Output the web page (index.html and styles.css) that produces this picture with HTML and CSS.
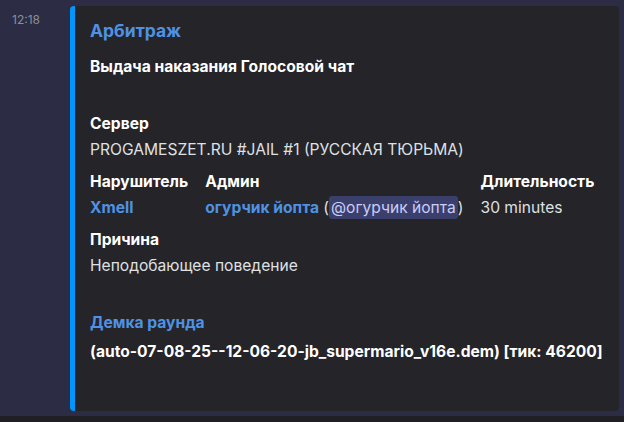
FILE: index.html
```html
<!DOCTYPE html>
<html lang="ru">
<head>
    <meta charset="UTF-8">
    <title>Арбитраж</title>
    <link rel="stylesheet" href="styles.css">
</head>
<body>
    <div class="chat">
        <div class="message">
            <div class="timestamp">12:18</div>
            <div class="embed">
                <div class="embed-title">Арбитраж</div>
                <div class="embed-desc">Выдача наказания Голосовой чат</div>

                <div class="fields">
                    <div class="field">
                        <div class="field-name">Сервер</div>
                        <div class="field-value">PROGAMESZET.RU #JAIL #1 (РУССКАЯ ТЮРЬМА)</div>
                    </div>
                    <div class="field-row">
                        <div class="field">
                            <div class="field-name">Нарушитель</div>
                            <div class="field-value"><span class="link">Xmell</span></div>
                        </div>
                        <div class="field">
                            <div class="field-name">Админ</div>
                            <div class="field-value"><span class="link">огурчик йопта</span> (<span class="mention">@огурчик йопта</span>)</div>
                        </div>
                        <div class="field">
                            <div class="field-name">Длительность</div>
                            <div class="field-value">30 minutes</div>
                        </div>
                    </div>
                    <div class="field">
                        <div class="field-name">Причина</div>
                        <div class="field-value">Неподобающее поведение</div>
                    </div>
                </div>

                <div class="demo">
                    <div class="demo-title">Демка раунда</div>
                    <div class="demo-file">(auto-07-08-25--12-06-20-jb_supermario_v16e.dem) [тик: 46200]</div>
                </div>
            </div>
        </div>
    </div>
</body>
</html>
```

FILE: styles.css
```css
body {
    margin: 0;
    background-color: #1f1f24;
    font-family: Inter, "Noto Sans", Arial, sans-serif;
    color: #dfe0e4;
}

.chat {
    background-color: #2c2d44;
    padding: 6px 0 5px 0;
}

.message {
    display: flex;
}

.timestamp {
    width: 70px;
    box-sizing: border-box;
    padding: 6px 0 0 12px;
    font-size: 12px;
    line-height: 16px;
    color: #8c8e99;
}

.embed {
    width: 549px;
    box-sizing: border-box;
    background-color: #242429;
    border-left: 5px solid #0096ff;
    border-radius: 4px;
    padding: 13px 16px 47px 15px;
    font-size: 15.6px;
    line-height: 24px;
}

.embed-title {
    font-size: 17.5px;
    font-weight: bold;
    color: #4f92e3;
}

.embed-desc {
    margin-top: 12px;
    font-weight: bold;
    color: #ffffff;
}

.fields {
    margin-top: 33px;
    display: flex;
    flex-direction: column;
    gap: 8px;
}

.field-row {
    display: flex;
    gap: 17px;
}

.field-name {
    font-weight: bold;
    color: #ffffff;
}

.field-value {
    margin-top: 2px;
    color: #dfe0e4;
}

.link {
    font-weight: bold;
    color: #4f92e3;
}

.mention {
    background-color: #3b3f6c;
    color: #c9cdfb;
    border-radius: 3px;
    padding: 2px 2px;
}

.demo {
    margin-top: 33px;
}

.demo-title {
    font-weight: bold;
    color: #4f92e3;
}

.demo-file {
    margin-top: 5px;
    font-weight: bold;
    color: #ffffff;
}
```
